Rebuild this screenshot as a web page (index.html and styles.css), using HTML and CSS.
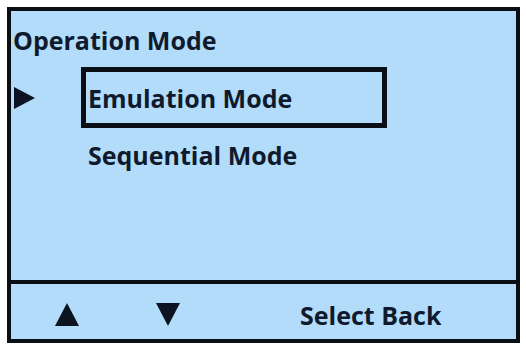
FILE: index.html
```html
<!DOCTYPE html>
<html>
<head>
<meta charset="utf-8">
<link rel="stylesheet" href="styles.css">
</head>
<body>
<div class="screen">
  <div class="main">
    <div class="title">Operation Mode</div>
    <div class="row">
      <div class="pointer">
        <svg width="21" height="22" viewBox="0 0 21 22"><polygon points="0,0 21,11 0,22" fill="#0b1420"/></svg>
      </div>
      <div class="item selected">Emulation Mode</div>
    </div>
    <div class="row">
      <div class="pointer"></div>
      <div class="item">Sequential Mode</div>
    </div>
  </div>
  <div class="bar">
    <svg class="up" width="24" height="23" viewBox="0 0 24 23"><polygon points="12,0 24,23 0,23" fill="#0b1420"/></svg>
    <svg class="down" width="24" height="23" viewBox="0 0 24 23"><polygon points="0,0 24,0 12,23" fill="#0b1420"/></svg>
    <div class="keys">Select Back</div>
  </div>
</div>
</body>
</html>
```
FILE: styles.css
```css
html, body {
  margin: 0;
  padding: 0;
  background: #ffffff;
}
body {
  padding: 7px 0 0 7px;
  font-family: "Open Sans", Lato, sans-serif;
  font-weight: 700;
  font-size: 25px;
  line-height: 28px;
  color: #0f1b2d;
}
.screen {
  width: 513px;
  height: 336px;
  box-sizing: border-box;
  border: 4px solid #0b0f14;
  background: #b3dcfb;
  display: flex;
  flex-direction: column;
}
.main {
  height: 273px;
  box-sizing: border-box;
  border-bottom: 4px solid #0b0f14;
  padding-top: 15px;
}
.title {
  padding-left: 2px;
}
.row {
  display: flex;
  align-items: center;
  margin-top: 13px;
}
.pointer {
  width: 67px;
  padding-left: 3px;
  display: flex;
  align-items: center;
}
.pointer svg {
  display: block;
}
.item {
  padding-left: 7px;
}
.item.selected {
  width: 306px;
  box-sizing: border-box;
  border: 5px solid #0a0f16;
  padding: 12px 0 11px 2px;
}
.bar {
  flex: 1;
  display: flex;
  align-items: center;
  padding-top: 6px;
  box-sizing: border-box;
}
.bar svg {
  display: block;
}
.up {
  margin-left: 44px;
}
.down {
  margin-left: 77px;
}
.keys {
  margin-left: 120px;
}
```
